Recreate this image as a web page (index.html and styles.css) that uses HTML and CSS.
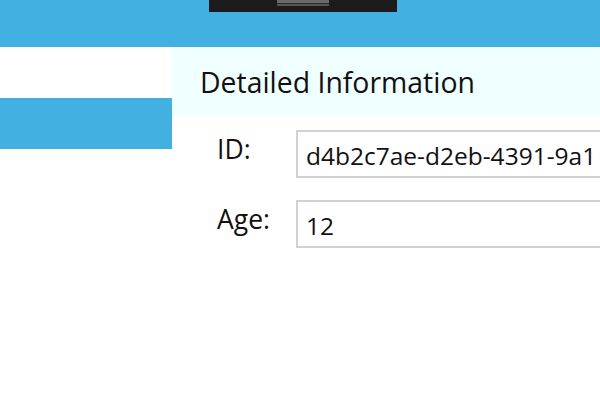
FILE: index.html
```html
<!DOCTYPE html>
<html>
<head>
<meta charset="utf-8">
<link rel="stylesheet" href="styles.css">
</head>
<body>
<div class="topbar">
  <div class="dark-block"><div class="grip"></div></div>
</div>
<div class="main">
  <div class="sidebar">
    <div class="item"></div>
    <div class="item selected"></div>
  </div>
  <div class="detail">
    <div class="detail-header">Detailed Information</div>
    <div class="form">
      <div class="label">ID:</div>
      <div class="field">d4b2c7ae-d2eb-4391-9a1</div>
      <div class="label">Age:</div>
      <div class="field">12</div>
    </div>
  </div>
</div>
</body>
</html>
```
FILE: styles.css
```css
html, body {
  margin: 0;
  padding: 0;
  width: 600px;
  height: 400px;
  overflow: hidden;
  background: #ffffff;
  font-family: "Open Sans", "Noto Sans", sans-serif;
  color: #111111;
}
.topbar {
  height: 47px;
  background: #42b0e0;
}
.dark-block {
  margin-left: 209px;
  width: 188px;
  height: 12px;
  background: #1c1c1c;
}
.grip {
  margin-left: 68px;
  width: 52px;
  height: 3px;
  background: #6a6a6a;
  border-bottom: 1px solid #2a2a2a;
  box-shadow: 0 2px 0 #555555;
}
.main {
  display: flex;
}
.sidebar {
  width: 172px;
  flex: none;
}
.item {
  height: 51px;
  background: #ffffff;
}
.item.selected {
  background: #42b0e0;
}
.detail {
  flex: 1;
  min-width: 0;
}
.detail-header {
  height: 69px;
  background: #f0ffff;
  padding-left: 28px;
  display: flex;
  align-items: center;
  font-size: 28.4px;
  white-space: nowrap;
}
.form {
  padding-top: 14px;
  display: grid;
  grid-template-columns: 124px 1fr;
  row-gap: 22px;
}
.label {
  padding-left: 45px;
  font-size: 26.5px;
  display: flex;
  align-items: center;
  padding-bottom: 10px;
}
.field {
  box-sizing: border-box;
  height: 48px;
  width: 420px;
  border: 2px solid #d2d2d2;
  padding-left: 8px;
  padding-top: 2px;
  font-size: 24.5px;
  display: flex;
  align-items: center;
  white-space: nowrap;
  overflow: hidden;
}
```
